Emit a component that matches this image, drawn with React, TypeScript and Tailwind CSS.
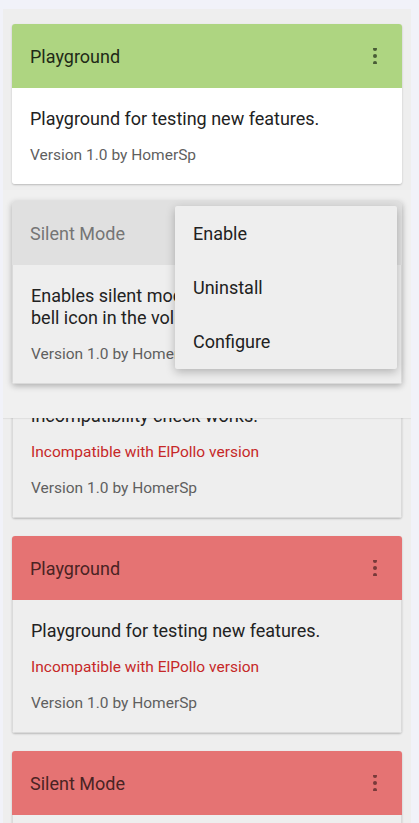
import React from 'react';

type Plugin = {
    id: string;
    title: string;
    lines: string[];
    incompatible?: boolean;
    status: 'enabled' | 'disabled' | 'incompatible';
};

const font = { fontFamily: 'Roboto, "Liberation Sans", sans-serif' };

const KebabIcon: React.FC<{ className?: string }> = ({ className }) => (
    <svg viewBox="0 0 16 16" className={className} fill="currentColor">
        <circle cx="8" cy="1" r="2" />
        <circle cx="8" cy="8" r="2" />
        <circle cx="8" cy="15" r="2" />
    </svg>
);

const PluginCard: React.FC<{ plugin: Plugin; elevated?: boolean; showMenu?: boolean }> = ({ plugin, elevated, showMenu = true }) => {
    const header =
        plugin.status === 'enabled'
            ? 'bg-[#aed581] text-[#1f2a17]'
            : plugin.status === 'incompatible'
            ? 'bg-[#e57373] text-[#4a2323]'
            : 'bg-[#e0e0e0] text-[#757575]';
    const body = plugin.status === 'enabled' ? 'bg-white' : 'bg-[#eeeeee] border-x border-b border-[#dadada]';
    return (
        <div className={`rounded-[3px] overflow-hidden ${elevated ? 'shadow-[0_2px_6px_rgba(0,0,0,0.28)]' : 'shadow-[0_1px_2px_rgba(0,0,0,0.22)]'}`}>
            <div className={`h-[64px] pl-[18px] pr-[19px] flex items-center justify-between ${header}`}>
                <span className="text-[18px]">{plugin.title}</span>
                {showMenu && <KebabIcon className="w-4 h-4 opacity-70" />}
            </div>
            <div className={`pl-[18px] pr-[18px] pt-[20px] pb-[18px] flex flex-col gap-[15px] ${body}`}>
                <p className="text-[18px] leading-[22px] text-[#222222]">
                    {plugin.lines.map((l, i) => (
                        <React.Fragment key={i}>
                            {i > 0 && <br />}
                            {l}
                        </React.Fragment>
                    ))}
                </p>
                {plugin.incompatible && (
                    <p className="text-[15.5px] leading-[21px] text-[#c62828]">Incompatible with ElPollo version</p>
                )}
                <p className="text-[15.5px] leading-[21px] text-[#5f5f5f]">Version 1.0 by HomerSp</p>
            </div>
        </div>
    );
};

const App: React.FC = () => {
    const plugins: Plugin[] = [
        { id: 'playground', title: 'Playground', lines: ['Playground for testing new features.'], status: 'enabled' },
        { id: 'incompat', title: 'Incompatible Test', lines: ['Test plugin to make sure the', 'incompatibility check works.'], incompatible: true, status: 'disabled' },
        { id: 'playground2', title: 'Playground', lines: ['Playground for testing new features.'], incompatible: true, status: 'incompatible' },
        { id: 'silent2', title: 'Silent Mode', lines: ['Enables silent mode when tapping the', 'bell icon in the volume dialog.'], incompatible: true, status: 'incompatible' },
    ];
    const dragged: Plugin = {
        id: 'silent',
        title: 'Silent Mode',
        lines: ['Enables silent mode when tapping the', 'bell icon in the volume dialog.'],
        status: 'disabled',
    };

    return (
        <div className="h-[823px] overflow-hidden bg-[#f1f2f9] pt-[9px] pl-[3px] pr-[8px]" style={font}>
            <div className="relative bg-[#eeeeee] h-[814px] overflow-hidden px-[9px] pt-[15px]">
                <div className="flex flex-col gap-[18px]">
                    <PluginCard plugin={plugins[0]} />
                    {/* slot left behind by the lifted card */}
                    <div className="h-[79px]" />
                    {plugins.slice(1).map(p => (
                        <PluginCard key={p.id} plugin={p} />
                    ))}
                </div>

                {/* lifted card with its popup menu */}
                <div className="absolute left-0 right-0 top-[181px] h-[228px] bg-[#f0f0f0] px-[9px] pt-[11px] shadow-[0_1px_1px_rgba(0,0,0,0.06)]">
                    <PluginCard plugin={dragged} elevated showMenu={false} />
                    <div className="absolute left-[172px] top-[16px] w-[222px] h-[163px] bg-[#eeeeee] rounded-[2px] shadow-[0_3px_10px_rgba(0,0,0,0.25)] flex flex-col">
                        {['Enable', 'Uninstall', 'Configure'].map(item => (
                            <div key={item} className="h-[54px] pl-[18px] flex items-center text-[18px] text-[#212121]">
                                {item}
                            </div>
                        ))}
                    </div>
                </div>
            </div>
        </div>
    );
};

export default App;
